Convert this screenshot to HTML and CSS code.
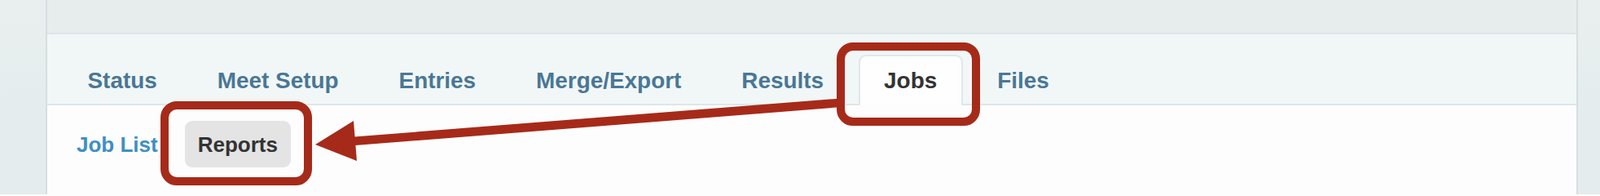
FILE: index.html
```html
<!DOCTYPE html>
<html lang="en">
<head>
<meta charset="utf-8">
<title>Jobs - Reports</title>
<link rel="stylesheet" href="styles.css">
</head>
<body>
<div class="page">
  <aside class="side side-left"></aside>
  <main class="main">
    <div class="header"></div>
    <nav class="tabs">
      <a class="tab">Status</a>
      <a class="tab">Meet Setup</a>
      <a class="tab">Entries</a>
      <a class="tab">Merge/Export</a>
      <a class="tab">Results</a>
      <a class="tab active">Jobs</a>
      <a class="tab">Files</a>
    </nav>
    <nav class="subnav">
      <a class="sub">Job List</a>
      <a class="sub current">Reports</a>
    </nav>
  </main>
  <aside class="side side-right"></aside>
</div>
<svg class="annotation" width="1964" height="238" viewBox="0 0 1964 238">
  <rect x="202" y="129" width="176" height="93" rx="15" fill="none" stroke="#a62a19" stroke-width="10"/>
  <rect x="1032" y="57" width="166" height="92" rx="15" fill="none" stroke="#a62a19" stroke-width="10"/>
  <line x1="1030" y1="126" x2="432" y2="173" stroke="#a62a19" stroke-width="10.5"/>
  <polygon points="387,177 434,148 438,197" fill="#a62a19"/>
</svg>
</body>
</html>
```

FILE: styles.css
```css
html, body {
  margin: 0;
  padding: 0;
}
body {
  width: 1964px;
  height: 238px;
  overflow: hidden;
  font-family: "Liberation Sans", Arial, Helvetica, sans-serif;
  position: relative;
  background: #fdfdfd;
}
.page {
  display: flex;
  height: 238px;
}
.side {
  background: linear-gradient(#e9efef, #e5eced 60%);
}
.side-left {
  width: 56px;
}
.side-right {
  flex: 1;
}
.main {
  width: 1877px;
  border-left: 2px solid #d6dee1;
  border-right: 2px solid #d6dee1;
  background: #fdfdfd;
  display: flex;
  flex-direction: column;
}
.header {
  height: 40px;
  background: #e7eded;
  border-bottom: 2px solid #dde5e8;
}
.tabs {
  height: 85px;
  background: #f1f7f7;
  border-bottom: 2px solid #dfe6ea;
  display: flex;
  align-items: flex-end;
  gap: 11px;
  padding-left: 18px;
}
.tab {
  height: 56px;
  line-height: 56px;
  padding: 2px 29.5px 2px;
  border: 2px solid transparent;
  border-bottom: 0;
  border-radius: 9px 9px 0 0;
  font-size: 27.9px;
  font-weight: bold;
  color: #4a7796;
  white-space: nowrap;
  margin-bottom: -2px;
}
.tab.active {
  background: #fefefe;
  border-color: #e0e7ea;
  color: #333333;
}
.subnav {
  display: flex;
  gap: 17px;
  padding: 19px 0 0 20px;
}
.sub {
  height: 56px;
  line-height: 56px;
  padding: 1px 16px 0;
  font-size: 26px;
  font-weight: bold;
  color: #3f8fc3;
  border-radius: 9px;
  white-space: nowrap;
}
.sub.current {
  background: #e4e4e4;
  color: #333333;
}
.annotation {
  position: absolute;
  left: 0;
  top: 0;
  pointer-events: none;
}
```
